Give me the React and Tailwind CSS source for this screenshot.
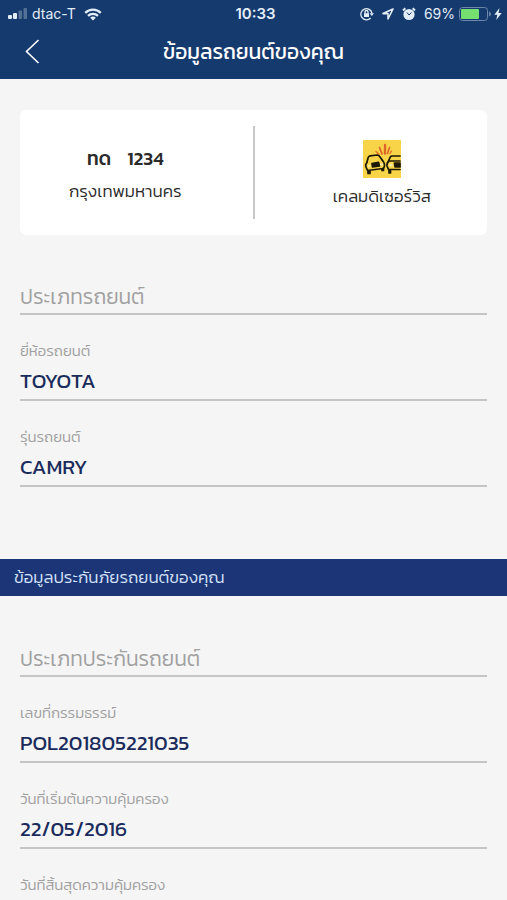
import React from 'react';

const carFields = [
    { id: 'carType', label: 'ประเภทรถยนต์', value: '' },
    { id: 'brand', label: 'ยี่ห้อรถยนต์', value: 'TOYOTA' },
    { id: 'model', label: 'รุ่นรถยนต์', value: 'CAMRY' },
];

const policyFields = [
    { id: 'policyType', label: 'ประเภทประกันรถยนต์', value: '' },
    { id: 'policyNo', label: 'เลขที่กรรมธรรม์', value: 'POL201805221035' },
    { id: 'startDate', label: 'วันที่เริ่มต้นความคุ้มครอง', value: '22/05/2016' },
    { id: 'endDate', label: 'วันที่สิ้นสุดความคุ้มครอง', value: '22/05/2017' },
];

function StatusBar() {
    return (
        <div className="grid grid-cols-[1fr_auto_1fr] items-center h-7 pl-2 pr-1 font-['Inter',sans-serif] text-sm text-[#e3edf8]">
            <div className="flex items-center gap-1">
                <svg width="20" height="12" viewBox="0 0 20 12" fill="currentColor">
                    <rect x="0" y="7" width="4" height="4" rx="1" />
                    <rect x="5" y="5" width="4" height="6" rx="1" />
                    <rect x="10.5" y="2.5" width="3.5" height="8.5" rx="1" opacity=".3" />
                    <rect x="15.5" y="0" width="3.5" height="11" rx="1" opacity=".3" />
                </svg>
                <span>dtac-T</span>
                <svg className="ml-1" width="18" height="13" viewBox="0 0 18 13" fill="none" stroke="currentColor" strokeWidth="2.2">
                    <path d="M1.2 4.9a11 11 0 0 1 15.6 0" />
                    <path d="M4 7.9a7.1 7.1 0 0 1 10 0" />
                    <path d="M6.2 9.8a4 4 0 0 1 5.6 0L9 12.6z" fill="currentColor" stroke="none" />
                </svg>
            </div>
            <span className="text-[15px] font-semibold">10:33</span>
            <div className="flex items-center justify-end gap-2">
                {/* rotation lock */}
                <svg width="14" height="14" viewBox="0 0 14 14" fill="none" stroke="currentColor" strokeWidth="1.3">
                    <path d="M10.6 11A5.6 5.6 0 1 1 12 6.3" />
                    <path d="M9.6 6.2H14l-2.200 2.800z" fill="currentColor" stroke="none" />
                    <rect x="4" y="6.2" width="5" height="3.8" fill="currentColor" stroke="none" />
                    <path d="M5 6.500V5a1.500 1.500 0 0 1 3 0v1.500" />
                </svg>
                <svg width="12" height="12" viewBox="0 0 12 12" fill="none" stroke="currentColor" strokeWidth="1.6" strokeLinejoin="round">
                    <path d="M11 1 1 5.600h5V11z" />
                </svg>
                {/* alarm */}
                <svg width="14" height="14" viewBox="0 0 14 14" fill="none" stroke="currentColor">
                    <circle cx="7" cy="7.500" r="5.600" fill="currentColor" stroke="none" />
                    <path d="M1 3.500 3.300 1.300M13 3.500l-2.300-2.200" strokeWidth="2" />
                    <path d="M5 5.500 7 8l2.500-2.500" stroke="#153a6e" strokeWidth="1" />
                </svg>
                <div className="flex items-center gap-1">
                    <span>69%</span>
                    <svg width="44" height="14" viewBox="0 0 44 14">
                        <rect x=".5" y=".5" width="28" height="13" rx="3" fill="none" stroke="#6d88aa" />
                        <rect x="2" y="2" width="18" height="10" rx="1" fill="#75df70" />
                        <path d="M30 4.500v5q2-.5 2-2.500t-2-2.500" fill="#6d88aa" />
                        <path d="M40.500 1 35.300 7.700h3L37.300 13l5.400-7h-3.200z" fill="currentColor" />
                    </svg>
                </div>
            </div>
        </div>
    );
}

function CrashLogo() {
    return (
        <svg width="38" height="38" viewBox="0 0 38 38" role="img" aria-label="Claim di service">
            <rect width="38" height="38" fill="#f8d548" />
            <g stroke="#e0662a" strokeLinecap="round">
                <path d="M22 13.500V5" strokeWidth="2.400" />
                <path d="m19 14-2.500-6.500" strokeWidth="1.800" />
                <path d="m24.500 13.500 2-6" strokeWidth="1.600" />
                <path d="m16 14.500-3-3M27 13.500l1.500-2.500" strokeWidth="1.200" />
            </g>
            <g fill="none" stroke="#1c1906" strokeWidth="1.700" strokeLinejoin="round" strokeLinecap="round">
                <path d="m4 22 1.200-4.500q.5-1.500 2-1.700l7-.8q1.500 0 2.300 1.300l3 4.200" />
                <path d="M4 22.500q-2 2-1 4.500l1.500 3.500 15.500-2q2-1.500 1.500-4T19.500 20.500" />
                <path d="m9 23.500 6.500-1.200 1 3.700-7 1z" fill="#1c1906" />
                <path d="M5 31v2.500h2V31M19 29v1.500h1.500V28" fill="#1c1906" />
                <path d="m25.500 21 1.800-4q.5-1 2-1H37" />
                <path d="M37 21H26q-2.500 2-2 5l1.500 3.500H37" />
                <path d="M31.500 23H37v4h-5z" fill="#1c1906" />
                <path d="M26 30v3h1.500v-3" fill="#1c1906" />
            </g>
            <g fill="#f6e9a8">
                <ellipse cx="6.200" cy="26" rx="1.700" ry="1.300" />
                <ellipse cx="18.500" cy="24.500" rx="1.500" ry="1.300" />
                <ellipse cx="28" cy="25" rx="1.900" ry="1.500" />
            </g>
        </svg>
    );
}

function Field({ field }) {
    // empty fields show their label inside the box
    if (!field.value) {
        return (
            <input
                id={field.id}
                aria-label={field.label}
                placeholder={field.label}
                readOnly
                className="block w-full h-9 border-b-2 border-[#c5c5c5] text-[21px] font-light placeholder:text-[#a0a0a0] outline-none"
            />
        );
    }

    return (
        <div className="pt-[26px]">
            <label htmlFor={field.id} className="block text-[15px] leading-5 font-light text-[#a0a0a0]">
                {field.label}
            </label>
            <input
                id={field.id}
                defaultValue={field.value}
                readOnly
                className="block w-full h-10 border-b-2 border-[#c5c5c5] text-[21px] text-[#1a2b5c] outline-none"
            />
        </div>
    );
}

function App() {
    return (
        <div className="h-screen flex flex-col bg-[#f5f5f5] font-['Kanit','Noto_Sans_Thai','Noto_Sans',sans-serif]">
            <header className="shrink-0 bg-[#153a6e]">
                <StatusBar />
                <div className="grid grid-cols-[64px_1fr_64px] items-center h-[51px] pb-1">
                    <button type="button" aria-label="Back" className="flex justify-center text-white">
                        <svg width="15" height="25" viewBox="0 0 15 25" fill="none" stroke="currentColor" strokeWidth="1.6">
                            <path d="M13.5 1 1.500 12.500l12 11.500" />
                        </svg>
                    </button>
                    <h1 className="text-center text-[21px] text-white">ข้อมูลรถยนต์ของคุณ</h1>
                </div>
            </header>

            <main className="flex-1 overflow-y-auto [scrollbar-width:none]">
                <section className="mx-5 mt-[31px] py-4 grid grid-cols-[1fr_auto_1fr] gap-[22px] rounded-md bg-white text-[#2a2a2a]">
                    <div className="flex flex-col items-center justify-center gap-1 pt-1">
                        <p className="flex gap-4 text-[19px] leading-7 font-medium">
                            <span>ทด</span>
                            <span>1234</span>
                        </p>
                        <p className="text-[17px] leading-7 font-light">กรุงเทพมหานคร</p>
                    </div>
                    <div className="w-[2px] h-[93px] bg-[#c8c8c8]" />
                    <div className="flex flex-col items-center justify-center gap-1 pt-1">
                        <CrashLogo />
                        <p className="text-[17px] leading-7 font-light">เคลมดิเซอร์วิส</p>
                    </div>
                </section>

                <section className="mx-5 mt-11">
                    {carFields.map((field) => (
                        <Field key={field.id} field={field} />
                    ))}
                </section>

                <h2 className="mt-[72px] px-[14px] h-[37px] flex items-center bg-[#1b3576] text-[17px] font-light text-[#d5e2fa]">
                    ข้อมูลประกันภัยรถยนต์ของคุณ
                </h2>

                <section className="mx-5 mt-[45px] pb-10">
                    {policyFields.map((field) => (
                        <Field key={field.id} field={field} />
                    ))}
                </section>
            </main>
        </div>
    );
}

export default App;
